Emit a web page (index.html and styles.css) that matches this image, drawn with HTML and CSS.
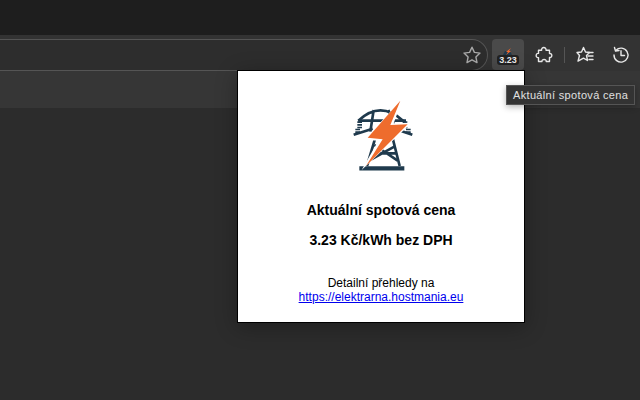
FILE: index.html
```html
<!DOCTYPE html>
<html>
<head>
  <title>Spotová cena</title>
  <link rel="stylesheet" href="styles.css">
</head>
<body>
  <div class="tabstrip"></div>
  <div class="toolbar">
    <div class="omnibox">
      <svg class="icon" viewBox="0 0 20 20" width="20" height="20">
        <path d="M10 2.200l2.400 5.200 5.600.7-4.100 3.900 1.100 5.600-5-2.800-5 2.800 1.100-5.600L2 8.100l5.600-.7z" />
      </svg>
    </div>
    <div class="ext-button">
      <svg class="ext-logo" viewBox="0 0 10 7" width="10" height="7">
        <path d="M0 7l2-4h5l2 4z" fill="#1f3a4d" />
        <path d="M8 0L3 4h2L3 7l5-4H6z" fill="#f26a2e" />
      </svg>
      <span class="ext-badge">3.23</span>
    </div>
    <div class="tool-button puzzle">
      <svg class="icon" viewBox="0 0 20 20" width="20" height="20">
        <path d="M7.600 5.200C7 1.600 12.600 1.600 12 5.200H15.500V8.600C18.600 8 18.600 13 15.500 12.400V16.500H12.200C12.800 13.800 7.400 13.800 8 16.500H4.500V12.600C1.400 13.200 1.400 7.800 4.500 8.400V5.200Z" />
      </svg>
    </div>
    <div class="divider"></div>
    <div class="tool-button favorites">
      <svg class="icon" viewBox="0 0 20 20" width="20" height="20">
        <path d="M8.500 2.500l2 4.500 4 .5-3 3 1 5-4-2.400-5.500 3 1.500-5.600L2 7.500l4.500-.5z" />
        <path d="M13.500 7.500h4.500M13 11h5M14 14.500h4" />
      </svg>
    </div>
    <div class="tool-button">
      <svg class="icon" viewBox="0 0 20 20" width="20" height="20">
        <path d="M5 5.200A7 7 0 1 1 3 10" />
        <path d="M3.500 2.500l1 3.500 3.500-.5" />
        <path d="M10 5.800V10.500h3.500" />
      </svg>
    </div>
  </div>
  <div class="bookmarks"></div>

  <div class="popup">
    <svg class="logo" viewBox="0 0 240 270" width="80" height="90">
      <g class="tower">
        <path d="M55 235H190" class="base" />
        <path d="M78 228L104 140M176 228L150 125" />
        <path d="M90 190H165M84 212L160 170M170 212L100 165" />
        <path d="M52 92Q118 30 186 92M98 60L88 125M142 60L165 120" />
        <path d="M52 92H195M38 134L95 116M214 134L160 116" />
      </g>
      <path class="beads" d="M56 94V116M192 94V116M50 116V130M202 116V130" />
      <path class="bolt-edge" d="M186 24L70 149L112 152L62 240L212 98L158 100Z" />
      <path class="bolt" d="M178 32L80 143L125 148L75 228L200 103L148 105Z" />
    </svg>
    <p class="title">Aktuální spotová cena</p>
    <p class="price">3.23 Kč/kWh bez DPH</p>
    <p class="details">Detailní přehledy na<br><a href="#">https://elektrarna.hostmania.eu</a></p>
  </div>

  <div class="tooltip">Aktuální spotová cena</div>
</body>
</html>
```

FILE: styles.css
```css
body {
  margin: 0;
  height: 400px;
  overflow: hidden;
  background-color: #2c2c2c;
  font-family: "Liberation Sans", Arial, sans-serif;
}

.tabstrip {
  height: 35px;
  background-color: #1e1e1e;
}

.toolbar {
  height: 36px;
  box-sizing: border-box;
  padding-top: 4px;
  background-color: #333;
  display: flex;
  align-items: flex-start;
}

.omnibox {
  width: 488px;
  height: 32px;
  box-sizing: border-box;
  flex-shrink: 0;
  background-color: #2d2d2d;
  border: 1px solid #555;
  border-left: none;
  border-radius: 0 16px 16px 0;
  display: flex;
  justify-content: flex-end;
  align-items: center;
  padding-right: 5px;
}

.ext-button {
  width: 32px;
  height: 31px;
  margin-left: 4px;
  border-radius: 4px;
  background-color: #4a4a4a;
  position: relative;
  display: flex;
  justify-content: center;
}

.ext-logo {
  margin-top: 9px;
}

.ext-badge {
  position: absolute;
  left: 5px;
  top: 16px;
  width: 22px;
  height: 10px;
  border-radius: 3px;
  background-color: #222;
  color: #eee;
  font-size: 9px;
  font-weight: bold;
  line-height: 10px;
  text-align: center;
}

.tool-button {
  width: 36px;
  height: 32px;
  display: flex;
  justify-content: center;
  align-items: center;
}

.puzzle {
  margin-left: 2px;
}

.favorites {
  margin-left: 2px;
}

.divider {
  width: 1px;
  height: 16px;
  margin-top: 8px;
  margin-left: 2px;
  background-color: #555;
}

.icon {
  fill: none;
  stroke: #e8e8e8;
  stroke-width: 1.4;
  stroke-linejoin: round;
  stroke-linecap: round;
}

.omnibox .icon {
  stroke: #aaa;
}

.bookmarks {
  height: 37px;
  background-color: #363636;
}

.popup {
  position: absolute;
  left: 237px;
  top: 70px;
  width: 286px;
  height: 251px;
  background-color: #fff;
  border: 1px solid #000;
  box-shadow: 0 4px 20px rgba(0, 0, 0, 0.3);
  text-align: center;
  color: #000;
}

.logo {
  display: block;
  margin: 19px auto 0;
}

.tower {
  fill: none;
  stroke: #1f3a4d;
  stroke-width: 8;
}

.tower .base {
  stroke-width: 13;
}

.beads {
  fill: none;
  stroke: #1f3a4d;
  stroke-width: 14;
  stroke-dasharray: 5 3;
}

.bolt-edge {
  fill: #fff;
}

.bolt {
  fill: #ee6c2d;
}

.title,
.price {
  font-size: 14px;
  font-weight: bold;
  margin: 0;
  line-height: 15px;
}

.title {
  margin-top: 23px;
}

.price {
  margin-top: 15px;
}

.details {
  font-size: 12px;
  line-height: 14px;
  margin: 28px 0 0;
}

.details a {
  color: #0000ee;
}

.tooltip {
  position: absolute;
  left: 506px;
  top: 85px;
  height: 20px;
  padding: 0 6px;
  box-sizing: border-box;
  background-color: #333;
  border: 1px solid #555;
  color: #e0e0e0;
  font-size: 11px;
  letter-spacing: 0.33px;
  line-height: 18px;
  white-space: nowrap;
  box-shadow: 0 2px 6px rgba(0, 0, 0, 0.3);
}
```
